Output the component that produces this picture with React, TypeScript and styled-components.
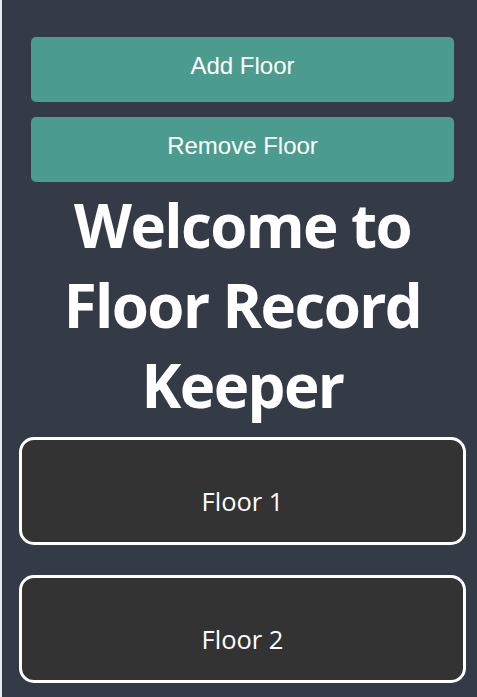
import React from "react";
import styled, { createGlobalStyle } from "styled-components";

const GlobalStyle = createGlobalStyle`
  html, body {
    margin: 0;
    padding: 0;
    overflow-x: hidden;
    background: #e6e9ee;
  }
  #root {
    overflow: hidden;
  }
`;

const Page = styled.div`
  margin-left: 2px;
  width: 481px;
  min-height: 697px;
  box-sizing: border-box;
  background: #353a47;
  padding-top: 37px;
  display: flex;
  flex-direction: column;
  align-items: center;
`;

const ButtonGroup = styled.div`
  display: flex;
  flex-direction: column;
  gap: 15px;
  width: 423px;
`;

const ActionButton = styled.button`
  display: block;
  width: 100%;
  height: 65px;
  box-sizing: border-box;
  padding: 0 0 7px;
  border: none;
  border-radius: 5px;
  background: #4b9c8f;
  color: #ffffff;
  font-family: "Liberation Sans", Arial, sans-serif;
  font-size: 24px;
  line-height: normal;
  text-align: center;
  cursor: pointer;
`;

const Title = styled.h1`
  margin: 0;
  padding-top: 3px;
  color: #ffffff;
  font-family: "Open Sans", "Noto Sans", sans-serif;
  font-weight: 700;
  font-size: 60px;
  line-height: 80px;
  letter-spacing: -1.6px;
  text-align: center;
`;

const FloorList = styled.div`
  display: flex;
  flex-direction: column;
  gap: 30px;
  margin-top: 12px;
  width: 447px;
`;

const FloorCard = styled.div`
  box-sizing: border-box;
  height: 108px;
  border: 3px solid #ffffff;
  border-radius: 15px;
  background: #333333;
  padding-top: 45px;
  color: #ffffff;
  font-family: "Open Sans", "Noto Sans", sans-serif;
  font-size: 25.5px;
  line-height: 33px;
  text-align: center;
`;

const floors = ["Floor 1", "Floor 2"];

export default function App() {
  return (
    <>
      <GlobalStyle />
      <Page>
        <ButtonGroup>
          <ActionButton>Add Floor</ActionButton>
          <ActionButton>Remove Floor</ActionButton>
        </ButtonGroup>
        <Title>
          Welcome to
          <br />
          Floor Record
          <br />
          Keeper
        </Title>
        <FloorList>
          {floors.map((f) => (
            <FloorCard key={f}>{f}</FloorCard>
          ))}
        </FloorList>
      </Page>
    </>
  );
}
